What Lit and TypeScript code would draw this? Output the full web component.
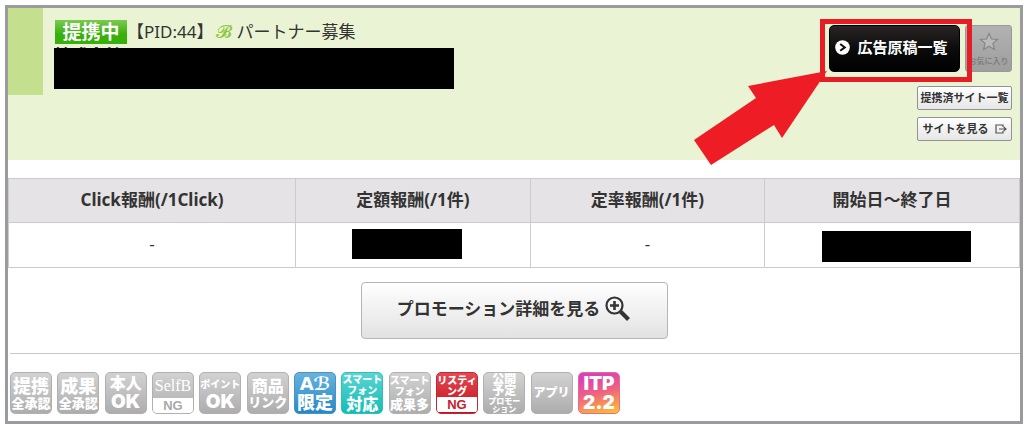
import { LitElement, html, css, nothing } from "lit";
import { customElement } from "lit/decorators.js";

interface Line {
  text: string;
  size: "xs" | "t" | "s" | "m" | "l" | "xl";
  kind?: string;
}

interface Mark {
  tone: string;
  lines: Line[];
}

const MARKS: Mark[] = [
  { tone: "gray", lines: [{ text: "提携", size: "l" }, { text: "全承認", size: "s" }] },
  { tone: "gray", lines: [{ text: "成果", size: "l" }, { text: "全承認", size: "s" }] },
  { tone: "gray", lines: [{ text: "本人", size: "m" }, { text: "OK", size: "xl" }] },
  { tone: "gray", lines: [{ text: "SelfB", size: "m", kind: "serif" }, { text: "NG", size: "s", kind: "plate" }] },
  { tone: "gray", lines: [{ text: "ポイント", size: "xs", kind: "loose" }, { text: "OK", size: "xl" }] },
  { tone: "gray", lines: [{ text: "商品", size: "m" }, { text: "リンク", size: "s" }] },
  { tone: "blue", lines: [{ text: "Aℬ", size: "l", kind: "script" }, { text: "限定", size: "l" }] },
  { tone: "teal", lines: [{ text: "スマート", size: "xs" }, { text: "フォン", size: "xs" }, { text: "対応", size: "m" }] },
  { tone: "gray", lines: [{ text: "スマート", size: "xs" }, { text: "フォン", size: "xs" }, { text: "成果多", size: "s" }] },
  { tone: "red", lines: [{ text: "リスティ", size: "xs" }, { text: "ング", size: "xs" }, { text: "NG", size: "s", kind: "plate" }] },
  { tone: "gray", lines: [{ text: "公開", size: "t" }, { text: "予定", size: "t" }, { text: "プロモー", size: "xs", kind: "tiny" }, { text: "ション", size: "xs", kind: "tiny" }] },
  { tone: "gray", lines: [{ text: "アプリ", size: "t" }] },
  { tone: "sunset", lines: [{ text: "ITP", size: "xl" }, { text: "2.2", size: "xl" }] },
];

@customElement("promo-mark")
class PromoMark extends LitElement {
  static properties = { mark: { attribute: false } };
  declare mark: Mark;

  static styles = css`
    :host { display: block; }
    .mark {
      box-sizing: border-box;
      width: 42px;
      height: 42px;
      display: flex;
      flex-direction: column;
      align-items: center;
      justify-content: center;
      overflow: hidden;
      border: 1px solid;
      border-radius: 5px;
      color: #fff;
      font-weight: 900;
      white-space: nowrap;
    }
    .gray { background: linear-gradient(#d2d2d2, #adadad); border-color: #b0b0b0; --plate: #a9a9a9; }
    .blue { background: linear-gradient(#69b3dc, #2489c8); border-color: #4a92c0; }
    .teal { background: linear-gradient(#5bd5d2, #12bdb6); border-color: #36bdb8; }
    .red { background: linear-gradient(#e24a52, #c4101d); border-color: #bf2a34; --plate: #c9202c; }
    .sunset { background: linear-gradient(165deg, #d943b8 15%, #f0637d 50%, #fcc52c); border-color: #e86a92; }
    .xs { font-size: 10px; line-height: 11px; }
    .t { font-size: 12px; line-height: 12px; }
    .s { font-size: 13px; line-height: 14px; }
    .m { font-size: 16px; line-height: 17px; }
    .l { font-size: 18px; line-height: 19px; }
    .xl { font-family: Inter, sans-serif; font-size: 19px; line-height: 19px; }
    .loose { line-height: 16px; }
    .tiny { font-size: 8px; line-height: 8px; }
    .serif { font-family: "Liberation Serif", serif; font-weight: 400; line-height: 24px; }
    .script { font-family: "DejaVu Sans", sans-serif; font-weight: 700; }
    .plate { align-self: stretch; text-align: center; background: #fff; color: var(--plate); line-height: 15px; font-weight: 700; font-family: "Liberation Sans", sans-serif; }
  `;

  render() {
    if (!this.mark) return nothing;
    return html`<div class="mark ${this.mark.tone}">
      ${this.mark.lines.map((l) => html`<span class="${l.size} ${l.kind ?? ""}">${l.text}</span>`)}
    </div>`;
  }
}

@customElement("app-root")
class AppRoot extends LitElement {
  static styles = css`
    :host {
      display: block;
      padding: 5px 1px 1px 5px;
      background: #fff;
      color: #333;
      font-family: "Noto Sans", "Noto Sans CJK JP", sans-serif;
      font-size: 17px;
      line-height: 24px;
    }
    * { box-sizing: border-box; }
    button { font: inherit; margin: 0; padding: 0; cursor: pointer; }
    .card { border: 3px solid #9b9b9f; background: #fff; }
    .head { display: flex; align-items: flex-start; background: #eaf3d3; padding-bottom: 19px; }
    .stripe { width: 35px; height: 87px; background: #c4df8d; flex: none; }
    .info { flex: 1; padding: 11px 0 0 11px; min-width: 0; }
    .title { display: flex; align-items: center; height: 26px; margin: 0; font-size: 17px; font-weight: 400; white-space: nowrap; }
    .status {
      width: 72px; height: 24px; margin-left: 1px;
      background: linear-gradient(#7cca52, #38b00c 60%);
      color: #fff; font-size: 19px; font-weight: 700; line-height: 24px; text-align: center;
    }
    .script { font-family: "DejaVu Serif", "DejaVu Sans", serif; color: #8cc63f; font-size: 18px; padding: 0 4px 0 3px; }
    .company { position: relative; width: 400px; max-width: 100%; height: 44px; line-height: 22px; font-weight: 700; overflow: hidden; }
    .cover { position: absolute; inset: 3px 0 0 0; background: #000; }
    .actions { flex: none; display: flex; flex-direction: column; align-items: flex-end; padding: 17px 8px 0 0; gap: 7px; }
    .main { display: flex; gap: 5px; margin-bottom: 7px; }
    .list { position: relative; z-index: 1; }
    .dark {
      display: flex; align-items: center; justify-content: center; gap: 7px;
      width: 131px; height: 47px; padding: 0 6px 3px 0; border: 1px solid #000; border-radius: 5px;
      background: linear-gradient(#2a2424, #0c0c0c 50%, #000);
      color: #fff; font-size: 15px; font-weight: 700; white-space: nowrap;
    }
    .frame { position: absolute; inset: -6px -12px -10px -9px; border: 5px solid #e81c24; pointer-events: none; }
    .arrow { position: absolute; top: 46px; right: 133px; pointer-events: none; }
    .fav {
      display: flex; flex-direction: column; align-items: center; justify-content: flex-end; gap: 3px;
      width: 47px; height: 47px; padding-bottom: 3px;
      border: 1px solid #999; border-radius: 3px; background: linear-gradient(#b2b2b2, #9e9e9e);
      color: #808080; font-size: 8px; font-weight: 700; line-height: 14px; white-space: nowrap; overflow: hidden;
    }
    .small {
      display: flex; align-items: center; justify-content: center; gap: 6px;
      width: 95px; height: 24px; border: 1px solid #929292; border-radius: 2px;
      background: linear-gradient(#fff, #e6e6e6); color: #333;
      font-size: 11px; font-weight: 700; white-space: nowrap;
    }
    table { width: 100%; margin-top: 18px; border-collapse: collapse; table-layout: fixed; }
    th, td { padding: 0 0 2px; border: 1px solid #cbcacd; text-align: center; vertical-align: middle; }
    th { height: 44px; background: #e5e3e6; font-weight: 700; }
    td { height: 45px; }
    th:first-child { width: 28.4%; }
    th:nth-child(2), th:nth-child(3) { width: 23.2%; }
    .amount { padding-right: 12px; }
    .period { padding: 2px 0 0 8px; }
    .redact { display: block; max-width: 100%; margin: 0 auto; background: #000; }
    .price { width: 110px; height: 30px; }
    .dates { width: 149px; height: 31px; }
    .detail {
      display: flex; align-items: center; justify-content: center; gap: 4px;
      width: 307px; height: 57px; margin: 14px auto 14px; padding-bottom: 4px;
      border: 1px solid #b5b5b5; border-radius: 4px; background: linear-gradient(#fff, #e2e2e2);
      color: #333; font-weight: 700; white-space: nowrap;
    }
    .marks {
      display: flex; justify-content: space-between;
      margin: 0 0 0 2px; padding: 18px 400px 7px 0; border-top: 1px solid #c9c9c9; list-style: none;
    }
  `;

  render() {
    return html`
      <main class="card">
        <header class="head">
          <div class="stripe"></div>
          <div class="info">
            <h1 class="title">
              <span class="status">提携中</span><span>【PID:44】</span><span class="script">𝓑</span><span>パートナー募集</span>
            </h1>
            <div class="company">株式会社<span class="cover"></span></div>
          </div>
          <div class="actions">
            <div class="main">
              <div class="list">
                <button class="dark" type="button">
                  <svg width="15" height="15" viewBox="0 0 15 15" aria-hidden="true">
                    <circle cx="7.5" cy="7.5" r="7.3" fill="#fff" />
                    <path d="M5.2 4 L9.8 7.4 L5.2 10.8" fill="none" stroke="#111" stroke-width="2" />
                  </svg>
                  <span>広告原稿一覧</span>
                </button>
                <div class="frame"></div>
                <svg class="arrow" width="133" height="94" viewBox="0 0 133 94" aria-hidden="true">
                  <path d="M133 0 L54 15 L62 27 L0 69 L17 94 L80 54 L88 67 Z" fill="#ee1c25" />
                </svg>
              </div>
              <button class="fav" type="button">
                <svg width="20" height="19" viewBox="0 0 20 19" aria-hidden="true">
                  <path d="M10 1.5 L12.4 7 L18.5 7.5 L13.9 11.4 L15.4 17.4 L10 14.2 L4.6 17.4 L6.1 11.4 L1.5 7.5 L7.6 7 Z" fill="#bababa" stroke="#868686" stroke-width="1.2" />
                </svg>
                <span>お気に入り</span>
              </button>
            </div>
            <button class="small" type="button">提携済サイト一覧</button>
            <button class="small" type="button">
              <span>サイトを見る</span>
              <svg width="12" height="10" viewBox="0 0 12 10" aria-hidden="true">
                <path d="M8 3 V1 H1 V9 H8 V7 M4 5 H10.5 M8.7 3 L11 5 L8.7 7" fill="none" stroke="#555" stroke-width="1.2" />
              </svg>
            </button>
          </div>
        </header>
        <table>
          <thead>
            <tr><th>Click報酬(/1Click)</th><th>定額報酬(/1件)</th><th>定率報酬(/1件)</th><th>開始日～終了日</th></tr>
          </thead>
          <tbody>
            <tr>
              <td>-</td>
              <td class="amount"><span class="redact price"></span></td>
              <td>-</td>
              <td class="period"><span class="redact dates"></span></td>
            </tr>
          </tbody>
        </table>
        <button class="detail" type="button">
          <span>プロモーション詳細を見る</span>
          <svg width="27" height="27" viewBox="0 0 27 27" aria-hidden="true">
            <circle cx="10.5" cy="10.5" r="8" fill="none" stroke="#333" stroke-width="2.2" />
            <path d="M10.5 6 V15 M6 10.5 H15" stroke="#333" stroke-width="2.6" />
            <path d="M16.5 16.5 L24.5 24.5" stroke="#333" stroke-width="4" />
          </svg>
        </button>
        <ul class="marks">
          ${MARKS.map((m) => html`<li><promo-mark .mark=${m}></promo-mark></li>`)}
        </ul>
      </main>
    `;
  }
}
